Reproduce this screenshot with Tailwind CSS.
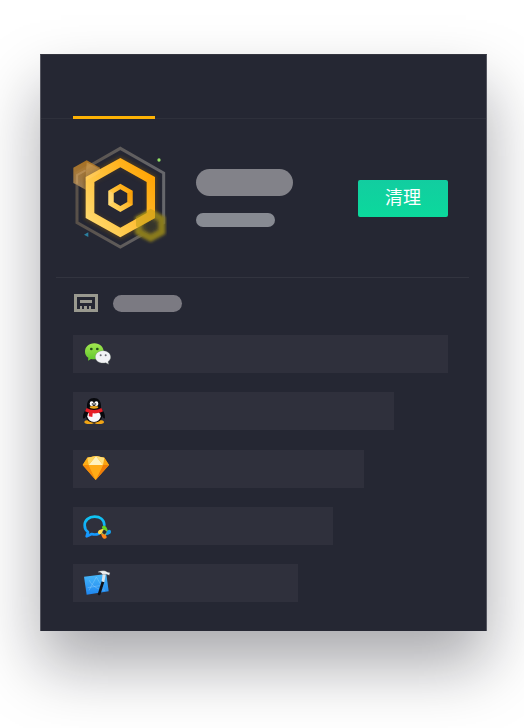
<!DOCTYPE html>
<html lang="zh-CN">
<head>
<meta charset="utf-8">
<meta name="viewport" content="width=device-width, initial-scale=1">
<title>清理</title>
<script src="https://cdn.jsdelivr.net/npm/@tailwindcss/browser@4"></script>
</head>
<body class="overflow-x-hidden bg-white font-['Liberation_Sans','Noto_Sans_CJK_SC',sans-serif]">
<main class="mt-[54px] mr-[37px] mb-[97px] ml-10 border-x border-t border-x-[#555660] border-t-[#34353f] bg-[#252733] pb-[29px] shadow-[0_34px_60px_rgba(10,10,20,0.35)]">
  <header class="flex h-16 items-end border-b border-[#2e303b] pl-8">
    <div class="-mb-px h-[3px] w-[82px] bg-[#fdb205]"></div>
  </header>

  <section class="mx-[15px] mr-[17px] flex h-[159px] items-center border-b border-[#32343f] pr-[21px] pl-[9px]">
    <svg class="h-[115px] w-[110px] shrink-0" viewBox="2 4 330 345" aria-hidden="true">
      <defs>
        <linearGradient id="gold" x1="0" y1="1" x2="1" y2="0.2">
          <stop offset="0" stop-color="#ffe07c"/><stop offset="0.5" stop-color="#ffc23c"/><stop offset="1" stop-color="#ffa200"/>
        </linearGradient>
        <linearGradient id="rim" x1="0" y1="0" x2="1" y2="0">
          <stop offset="0" stop-color="#585049"/><stop offset="1" stop-color="#66676c"/>
        </linearGradient>
        <linearGradient id="tan" x1="0" y1="0" x2="0" y2="1">
          <stop offset="0" stop-color="#b97a1e"/><stop offset="1" stop-color="#a98a62"/>
        </linearGradient>
        <filter id="soft" x="-20%" y="-20%" width="140%" height="140%"><feGaussianBlur stdDeviation="4"/></filter>
        <filter id="glow" x="-20%" y="-20%" width="140%" height="140%"><feGaussianBlur stdDeviation="7"/></filter>
      </defs>
      <path d="M168 26 298 100V249L168 322 38 249V100Z" fill="none" stroke="url(#rim)" stroke-width="9"/>
      <path d="M67 62 107 84V130L67 152 27 130V84Z" fill="url(#tan)" opacity=".88"/>
      <path d="M64 92 38 106V132" fill="none" stroke="#c19a62" stroke-width="6" opacity=".6"/>
      <path d="M168 69 260 120V228L168 279 77 228V120Z" fill="none" stroke="#6b4b18" stroke-width="30" opacity=".5" filter="url(#glow)"/>
      <path d="M168 83 247 127V220L168 264 90 220V127Z" fill="#262733"/>
      <path d="M168 69 260 120V228L168 279 77 228V120Z" fill="none" stroke="#6b4b18" stroke-width="30" opacity=".35" filter="url(#glow)"/>
      <path d="M259 218 293 238V277L259 296 222 277V238Z" fill="#4f4928" stroke="#8a7b1e" stroke-width="20" filter="url(#soft)"/>
      <path d="M259 240 277 250V268L259 277 242 268V250Z" fill="#35342c" filter="url(#soft)"/>
      <path fill="url(#gold)" fill-rule="evenodd" d="M168 55 272 112V235L168 293 64 235V112ZM168 83 90 127V220L168 264 247 220V127Z"/>
      <path d="M215 232 259 207 272 214V235L222 264 215 260Z" fill="#b09a14" opacity=".45"/>
      <path d="M67 68 107 88V100L64 124V112Z" fill="#ffd58a" opacity=".25"/>
      <path fill="url(#gold)" fill-rule="evenodd" d="M168 132 205 153V196L168 217 132 196V153ZM168 149 148 161V187L168 199 189 187V161Z"/>
      <path d="M132 153 148 161V187L132 196Z" fill="#ffe59c" opacity=".4"/>
      <path d="M205 153 189 161V187L205 196Z" fill="#e98a00" opacity=".3"/>
      <circle cx="284" cy="61" r="5" fill="#94e267"/>
      <path d="M59 285 72 278V292Z" fill="#2b7f9f"/>
    </svg>
    <div class="ml-[21px] flex flex-col gap-[17px]">
      <div class="h-[27px] w-[97px] rounded-full bg-[#828289]"></div>
      <div class="h-3.5 w-[79px] rounded-full bg-[#878a92]"></div>
    </div>
    <button type="button" class="ml-auto h-[37px] w-[90px] rounded-xs bg-linear-to-b from-[#12cda0] to-[#0bd99c] text-lg text-white">清理</button>
  </section>

  <section class="pt-4 pr-[38px] pl-8">
    <div class="flex h-[18px] items-center gap-[15px]">
      <svg class="ml-px h-[18px] w-6" viewBox="0 0 24 18" fill="#99998f" aria-hidden="true">
        <path fill-rule="evenodd" d="M0 0H24V18H0ZM3 3V15H21V3Z"/>
        <path d="M4 4H20V15H18V6H6V15H4Z" fill="#252733"/>
        <path d="M6 6H18V9H6ZM6 12H8V15H6ZM10 12H13V15H10ZM15 12H17V15H15Z"/>
      </svg>
      <div class="h-[17px] w-[69px] rounded-full bg-[#7b7a82]"></div>
    </div>

    <ul class="mt-[23px] flex h-[267px] flex-col justify-between">
      <li class="flex h-[38px] items-center bg-[#2f303c] pl-2" style="width:100%">
        <svg class="h-[30px] w-[30px]" viewBox="-1 1 90 90" role="img" aria-label="微信">
          <defs><linearGradient id="wx" x1="0" y1="0" x2="0" y2="1"><stop offset="0" stop-color="#a2e850"/><stop offset="1" stop-color="#5fc52c"/></linearGradient></defs>
          <path d="M39 14C22 14 11 25 11 39c0 8 4 14 10 18l-1 9 9-5c3 1 7 1 10 1 17 0 28-10 28-23S56 14 39 14Z" fill="url(#wx)"/>
          <circle cx="30" cy="31" r="4" fill="#264d1b"/><circle cx="48" cy="31" r="4" fill="#264d1b"/>
          <path d="M65 36c-14 0-23 9-23 19s9 18 23 18c3 0 6 0 8-1l9 5-2-8c5-4 8-8 8-14 0-10-9-19-23-19Z" fill="#f2f2f5" stroke="#6f8070" stroke-width="1"/>
          <circle cx="58" cy="50" r="3" fill="#696971"/><circle cx="73" cy="50" r="3" fill="#696971"/>
        </svg>
      </li>
      <li class="flex h-[38px] items-center bg-[#2f303c] pl-2" style="width:85.6%">
        <svg class="h-[30px] w-[30px]" viewBox="-1 0 90 90" role="img" aria-label="QQ">
          <ellipse cx="24" cy="78" rx="15" ry="6" fill="#f2a514"/><ellipse cx="53" cy="78" rx="15" ry="6" fill="#f2a514"/>
          <path d="M38 6C24 6 17 16 17 29v9C10 44 4 55 5 66c1 4 6 1 9-5 1 10 8 19 24 19s23-9 25-19c3 6 7 9 8 5 1-11-5-22-12-29v-8C59 16 52 6 38 6Z" fill="#08090d"/>
          <ellipse cx="38" cy="61" rx="20" ry="17" fill="#f8f8fb"/>
          <ellipse cx="31" cy="23" rx="6" ry="7" fill="#fff"/><ellipse cx="45" cy="23" rx="6" ry="7" fill="#fff"/>
          <circle cx="33" cy="24" r="2" fill="#111"/><circle cx="43" cy="24" r="2" fill="#111"/>
          <ellipse cx="38" cy="34" rx="13" ry="4" fill="#eda51c"/>
          <path d="M16 36c13 8 31 8 44 0l5 10c-10 5-21 7-31 6l-1 11-11-2 1-11-12-4Z" fill="#e61e27"/>
        </svg>
      </li>
      <li class="flex h-[38px] items-center bg-[#2f303c] pl-2" style="width:77.6%">
        <svg class="h-[30px] w-[30px]" viewBox="0 3 90 90" role="img" aria-label="Sketch">
          <path d="M19 14 45 9 70 14 84 36 44 81 5 36Z" fill="#fca714"/>
          <path d="M19 14 45 9 23 36H5Z" fill="#fcae18"/><path d="M70 14 45 9 66 36H84Z" fill="#f9a310"/>
          <path d="M45 9 66 36H23Z" fill="#fff2bd"/><path d="M19 14 45 9 23 36Z" fill="#ffd55d"/><path d="M70 14 45 9 66 36Z" fill="#ffe07c"/>
          <path d="M5 36H23L44 81Z" fill="#f48b0a"/><path d="M66 36H84L44 81Z" fill="#f07d08"/><path d="M23 36H66L44 81Z" fill="#ffac16"/>
        </svg>
      </li>
      <li class="flex h-[38px] items-center bg-[#2f303c] pl-2" style="width:69.3%">
        <svg class="h-[30px] w-[30px]" viewBox="-1 -1 90 90" role="img" aria-label="企业微信">
          <defs><linearGradient id="ww" x1="0" y1="0" x2="0" y2="1"><stop offset="0" stop-color="#0fc4f2"/><stop offset="1" stop-color="#1695ff"/></linearGradient></defs>
          <path d="M69 41C68 25 56 16 40 16 22 16 10 27 10 42c0 9 4 16 10 20l-4 13 15-7c7 2 14 2 21-1" fill="none" stroke="url(#ww)" stroke-width="8" stroke-linecap="round" stroke-linejoin="round"/>
          <path d="M59 62 69 51 80 62 69 73Z" fill="#282d32" stroke="#9ab85d" stroke-width="4"/>
          <path d="M68 43c7 0 8 7 12 15-10-1-18-4-18-10 0-3 2-5 6-5Z" fill="#64d320"/>
          <path d="M89 61c0 7-7 8-15 11 1-10 4-17 10-17 3 0 5 2 5 6Z" fill="#159eea"/>
          <path d="M70 82c-7 0-8-7-11-15 10 1 17 4 17 10 0 3-2 5-6 5Z" fill="#ff8518"/>
          <path d="M50 63c0-7 7-8 15-11-1 10-4 17-10 17-3 0-5-2-5-6Z" fill="#ffd94a"/>
        </svg>
      </li>
      <li class="flex h-[38px] items-center bg-[#2f303c] pl-2" style="width:60%">
        <svg class="h-[30px] w-[30px]" viewBox="-2 -1 90 90" role="img" aria-label="Xcode">
          <defs><linearGradient id="xc" x1="0" y1="0" x2="0" y2="1"><stop offset="0" stop-color="#48b9fa"/><stop offset="1" stop-color="#1f86ef"/></linearGradient></defs>
          <path d="M7 25 74 17 81 69 15 79Z" fill="url(#xc)"/>
          <path d="M22 66 44 26 65 61M18 58 66 50M23 36C31 52 45 63 70 66" fill="none" stroke="#a7dcff" stroke-width="2" opacity=".5"/>
          <path d="M60 39 68 41 56 79Q51 83 48 78Z" fill="#111318"/>
          <path d="M63 16 72 18 68 42 60 39Z" fill="#dce4e9"/>
          <path d="M49 10C60 5 73 7 76 11L85 13 83 21 74 18 62 18C60 13 55 12 49 12Z" fill="#eef0f1" stroke="#55585c" stroke-width="1"/>
        </svg>
      </li>
    </ul>
  </section>
</main>
</body>
</html>
